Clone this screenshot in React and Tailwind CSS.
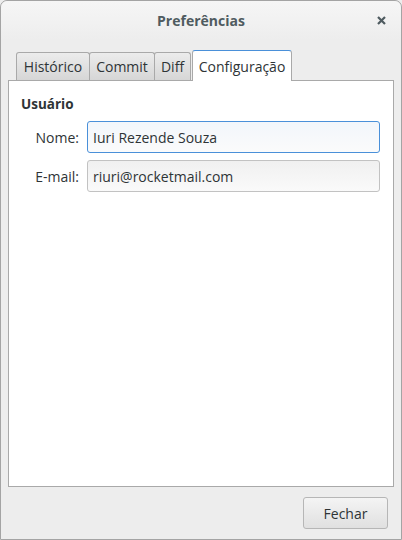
const tabs = [
  { label: "Histórico", w: "w-[74px]" },
  { label: "Commit", w: "w-[66px]" },
  { label: "Diff", w: "w-[37px]" },
];

const Field = ({ label, value, focused }) => (
  <div className="flex items-center h-[32px]">
    <span className="w-[59px] text-right pr-[1px] text-[14px] text-[#2e3436]">
      {label}
    </span>
    <div
      className={
        focused
          ? "ml-[7px] flex-1 h-[32px] flex items-center px-[5px] rounded-[3px] border border-[#4a90d9] bg-gradient-to-b from-[#f2f6fb] to-[#fbfbfb] text-[14px] text-[#2e3436]"
          : "ml-[7px] flex-1 h-[32px] flex items-center px-[5px] rounded-[3px] border border-[#c2c2c2] bg-gradient-to-b from-[#f0f0f0] to-[#fafafa] text-[14px] text-[#2e3436]"
      }
    >
      {value}
    </div>
  </div>
);

export default function App() {
  return (
    <div
      className="w-[402px] h-[540px] bg-[#ededed]"
      style={{ fontFamily: '"Open Sans", "Noto Sans", sans-serif' }}
    >
      <div className="w-full h-full flex flex-col border border-[#a4a4a4] rounded-t-[7px] bg-[#ededed]">
        {/* title bar */}
        <div className="relative h-[39px] flex items-center justify-center rounded-t-[7px] bg-gradient-to-b from-[#f6f6f6] to-[#ededed]">
          <span className="text-[14px] font-bold text-[#4f5b60]">Preferências</span>
          <svg
            className="absolute right-[15px] top-[15px]"
            width="9"
            height="9"
            viewBox="0 0 9 9"
          >
            <path d="M1 1L8 8M8 1L1 8" stroke="#4f5b60" strokeWidth="2.2" />
          </svg>
        </div>

        {/* tabs */}
        <div className="h-[40px] flex items-end px-[15px]">
          {tabs.map((t) => (
            <div
              key={t.label}
              className={`${t.w} h-[28px] flex items-center justify-center border border-b-0 border-[#a9a9a9] -ml-px first:ml-0 rounded-t-[3px] bg-gradient-to-b from-[#ececec] to-[#d6d6d6] text-[14px] text-[#2e3436]`}
            >
              {t.label}
            </div>
          ))}
          <div className="w-[100px] h-[31px] flex items-center justify-center ml-px border border-b-0 border-[#a9a9a9] border-t-[#4a90d9] rounded-t-[3px] bg-white text-[14px] text-[#2e3436] relative top-px z-10">
            Configuração
          </div>
        </div>

        {/* notebook page */}
        <div className="flex-1 mx-[7px] border border-[#a9a9a9] bg-white px-[12px] pt-[14px]">
          <div className="text-[13.5px] font-bold text-[#2e3436] leading-[18px]">
            Usuário
          </div>
          <div className="mt-[8px] flex flex-col gap-[7px] pr-[1px]">
            <Field label="Nome:" value="Iuri Rezende Souza" focused />
            <Field label="E-mail:" value="riuri@rocketmail.com" />
          </div>
        </div>

        {/* footer */}
        <div className="h-[52px] flex items-center justify-end pr-[13px]">
          <button className="w-[85px] h-[32px] rounded-[3px] border border-[#b6b6b6] bg-gradient-to-b from-[#f4f4f4] to-[#e0e0e0] text-[14px] text-[#2e3436]">
            Fechar
          </button>
        </div>
      </div>
    </div>
  );
}
